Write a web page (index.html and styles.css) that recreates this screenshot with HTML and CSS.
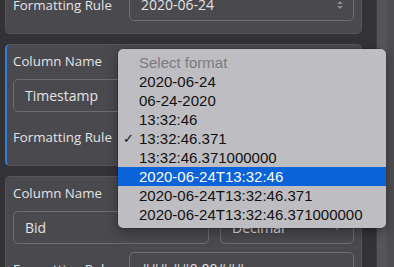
FILE: index.html
```html
<!DOCTYPE html>
<html lang="en">
  <head>
    <meta charset="UTF-8" />
    <meta name="viewport" content="width=device-width, initial-scale=1.0" />
    <title>Column Formats</title>
    <link rel="stylesheet" href="styles.css">
  </head>
  <body>
    <div class="window">
      <div class="columns">
        <div class="card card-top">
          <div class="rule-row">
            <span class="label">Formatting Rule</span>
            <div class="field select">
              <span>2020-06-24</span>
              <span class="updown">
                <svg width="8" height="12" viewBox="0 0 8 12"><path d="M1 5 L4 2 L7 5 Z M1 7 L4 10 L7 7 Z" fill="#8c8b8f"/></svg>
              </span>
            </div>
          </div>
        </div>

        <div class="card active">
          <div class="label name-label">Column Name</div>
          <div class="name-row">
            <div class="field name-field">Timestamp</div>
            <div class="field type-field">Timestamp</div>
          </div>
          <div class="rule-row">
            <span class="label">Formatting Rule</span>
            <div class="field">13:32:46.371</div>
          </div>
        </div>

        <div class="card">
          <div class="label name-label">Column Name</div>
          <div class="name-row">
            <div class="field name-field">Bid</div>
            <div class="field type-field select">
              <span>Decimal</span>
              <svg width="10" height="6" viewBox="0 0 10 6"><path d="M1 1 L5 5 L9 1 Z" fill="#8c8b8f"/></svg>
            </div>
          </div>
          <div class="rule-row">
            <span class="label">Formatting Rule</span>
            <div class="field">###,##0.00###</div>
          </div>
        </div>
      </div>
      <div class="side-strip"></div>

      <ul class="menu">
        <li class="menu-item placeholder">Select format</li>
        <li class="menu-item">2020-06-24</li>
        <li class="menu-item">06-24-2020</li>
        <li class="menu-item">13:32:46</li>
        <li class="menu-item checked"><span class="check">✓</span>13:32:46.371</li>
        <li class="menu-item">13:32:46.371000000</li>
        <li class="menu-item selected">2020-06-24T13:32:46</li>
        <li class="menu-item">2020-06-24T13:32:46.371</li>
        <li class="menu-item">2020-06-24T13:32:46.371000000</li>
      </ul>
    </div>
  </body>
</html>
```
FILE: styles.css
```css
body {
  margin: 0;
  padding: 0;
  background-color: #333236;
  font-family: "Open Sans", "Noto Sans", sans-serif;
  color: #e4e3e6;
  overflow: hidden;
}

.window {
  position: relative;
  display: flex;
  width: 394px;
  height: 267px;
  overflow: hidden;
}

.columns {
  flex: 1;
  display: flex;
  flex-direction: column;
  gap: 10px;
  padding: 0 14px 0 5px;
  margin-top: -20px;
}

.side-strip {
  width: 17px;
  flex-shrink: 0;
  background-color: #56555a;
  border-left: 1px solid #403f43;
  box-shadow: inset -7px 0 0 #4d4c50;
}

.card {
  background-color: #4a494d;
  border: 1px solid #555458;
  border-radius: 5px;
  padding: 7px 7px 12px 7px;
  display: flex;
  flex-direction: column;
}

.card.active {
  border-left: 2px solid #2f7fe0;
  padding-left: 6px;
}

.label {
  font-size: 13.3px;
  line-height: 16px;
  white-space: nowrap;
}

.name-label {
  margin-top: 1px;
}

.name-row {
  display: flex;
  gap: 11px;
  margin-top: 10px;
}

.field {
  height: 33px;
  box-sizing: border-box;
  border: 1px solid #6e6d72;
  border-radius: 5px;
  background-color: #4a494d;
  padding: 0 11px;
  display: flex;
  align-items: center;
  font-size: 14px;
  white-space: nowrap;
}

.name-field {
  width: 196px;
}

.type-field {
  flex: 1;
}

.select {
  justify-content: space-between;
}

.rule-row {
  display: flex;
  align-items: center;
  margin-top: 8px;
}

.rule-row .label {
  width: 116px;
}

.rule-row .field {
  flex: 1;
}

.card-top .rule-row {
  margin-top: 0;
}

.updown {
  display: flex;
  margin-right: -2px;
}

/* popup menu */
.menu {
  position: absolute;
  left: 118px;
  top: 49px;
  width: 268px;
  margin: 0;
  padding: 4px 0;
  list-style: none;
  background-color: #bebdc1;
  border-radius: 5px;
  box-shadow: 0 4px 12px rgba(0, 0, 0, 0.35), 0 0 0 0.5px rgba(0, 0, 0, 0.3);
  font-family: "Liberation Sans", Arial, sans-serif;
  font-size: 15px;
  color: #111;
}

.menu-item {
  position: relative;
  height: 19px;
  line-height: 19px;
  padding-left: 21px;
  white-space: nowrap;
}

.menu-item.placeholder {
  color: #7c7b80;
}

.menu-item.selected {
  background-color: #0a63d8;
  color: white;
}

.check {
  position: absolute;
  left: 5px;
  font-size: 13px;
}
```
